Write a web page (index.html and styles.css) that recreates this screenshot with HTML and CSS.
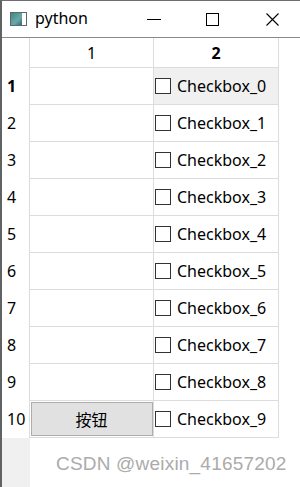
FILE: index.html
```html
<!DOCTYPE html>
<html lang="zh">
<head>
    <meta charset="UTF-8">
    <title>python</title>
    <link rel="stylesheet" href="styles.css">
</head>
<body>
<div class="window">
    <div class="titlebar">
        <span class="appicon"><span class="appicon-fill"></span></span>
        <span class="title">python</span>
        <span class="ctrl ctrl-min"><svg width="14" height="14" viewBox="0 0 14 14"><path d="M0 7.5H14" stroke="#000" stroke-width="1"/></svg></span>
        <span class="ctrl ctrl-max"><svg width="13" height="13" viewBox="0 0 13 13"><rect x="0.5" y="0.5" width="12" height="12" fill="none" stroke="#000"/></svg></span>
        <span class="ctrl ctrl-close"><svg width="13" height="13" viewBox="0 0 13 13"><path d="M0.5 0.5L12.5 12.5M12.5 0.5L0.5 12.5" stroke="#000" stroke-width="1.1"/></svg></span>
    </div>
    <div class="main">
        <div class="vhead-bg"></div>
        <table class="grid">
            <thead>
                <tr><th class="corner"></th><th>1</th><th class="cur">2</th></tr>
            </thead>
            <tbody id="rows"></tbody>
        </table>
        <div class="watermark">CSDN @weixin_41657202</div>
    </div>
</div>
<script>
    var rows = document.getElementById("rows");
    for (var i = 0; i < 10; i++) {
        var tr = document.createElement("tr");
        var first = i === 0 ? ' class="rh cur"' : ' class="rh"';
        var btn = i === 9 ? '<button class="btn">按钮</button>' : '';
        var sel = i === 0 ? ' sel' : '';
        tr.innerHTML = '<th' + first + '>' + (i + 1) + '</th>' +
            '<td class="c1">' + btn + '</td>' +
            '<td class="c2' + sel + '"><label class="cb"><span class="box"></span>Checkbox_' + i + '</label></td>';
        rows.appendChild(tr);
    }
</script>
</body>
</html>
```

FILE: styles.css
```css
html, body { margin: 0; padding: 0; background: #fff; }
body { font-family: "Noto Sans", "Noto Sans CJK SC", sans-serif; font-size: 16px; color: #000; }

.window { width: 300px; height: 487px; border-top: 1px solid #6d6d6d; border-left: 2px solid #5f6364; box-sizing: border-box; overflow: hidden; }

.titlebar { height: 36px; display: flex; align-items: center; border-bottom: 1px solid #8a8a8a; }
.appicon { width: 15px; height: 12px; margin-left: 8px; border: 1px solid #5a6a6a; background: #fff; display: flex; }
.appicon-fill { width: 11px; height: 100%; background: linear-gradient(135deg, #3e8a7c, #6aa8a8 60%, #2f6c78); }
.title { margin-left: 8px; font-size: 16px; font-family: "Noto Sans", sans-serif; position: relative; top: -1px; }
.ctrl { display: flex; }
.ctrl-min { margin-left: auto; margin-right: 45px; }
.ctrl-max { margin-right: 47px; }
.ctrl-close { margin-right: 21px; }

.main { position: relative; height: 449px; }
.vhead-bg { position: absolute; left: 0; top: 0; width: 28px; height: 100%; background: #f0f0f0; }

.grid { position: relative; border-collapse: collapse; table-layout: fixed; }
.grid th, .grid td { padding: 0; }
.grid thead th { height: 29px; font-weight: normal; text-align: center; border-left: 1px solid #dcdcdc; border-right: 1px solid #dcdcdc; background: #fff; }
.grid thead th.corner { width: 27px; border-left: none; border-right: 1px solid #dcdcdc; }
.grid thead th:nth-child(2) { width: 123px; }
.grid thead th:nth-child(3) { width: 124px; }
.grid thead th.cur { font-weight: bold; }

.grid tbody tr { height: 37px; }
.rh { background: #fff; font-weight: normal; text-align: left; padding-left: 5px !important; border-right: 1px solid #dcdcdc; }
.rh.cur { font-weight: bold; }
.grid td { border: 1px solid #dcdcdc; background: #fff; }
.grid td.sel { background: #f0f0f0; }

.cb { display: flex; align-items: center; gap: 6px; padding-left: 1px; }
.box { width: 14px; height: 14px; border: 1px solid #333; background: #fff; }

.c1 { position: relative; }
.btn { display: block; width: 122px; height: 34px; margin: 0 auto; font: inherit; background: #e1e1e1; border: 1px solid #adadad; color: #000; }

.watermark { position: absolute; left: 54px; top: 415px; font-family: "Liberation Sans", Arial, sans-serif; font-size: 19px; color: #ababab; text-shadow: 0 0 2px #fff, 0 0 1px #fff; letter-spacing: 0.2px; }
```
